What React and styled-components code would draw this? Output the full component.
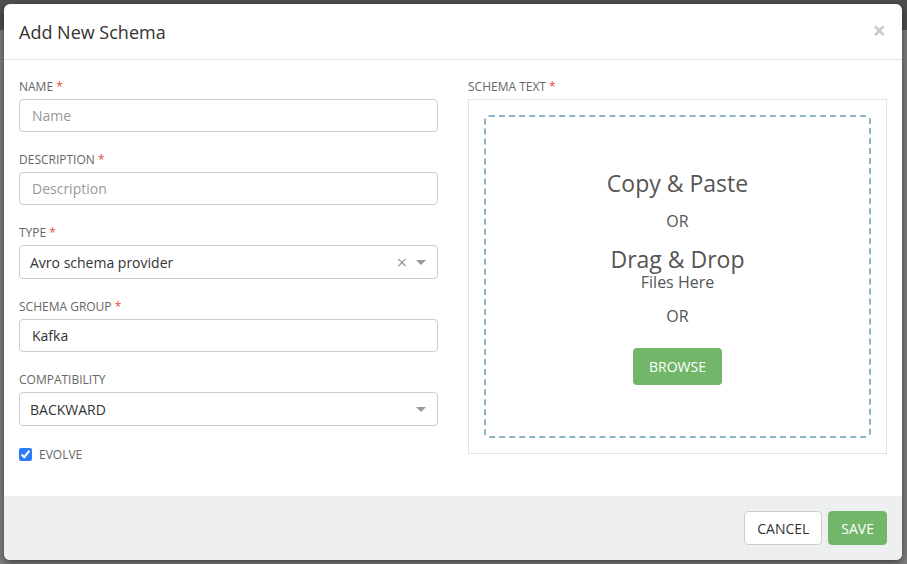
import React from "react"
import styled, { createGlobalStyle } from "styled-components"

const GlobalStyle = createGlobalStyle`
  html, body {
    margin: 0;
    padding: 0;
    font-family: "Open Sans", "Liberation Sans", sans-serif;
  }
  * { box-sizing: border-box; }
`

const COLORS = {
    TEXT: "#333",
    LABEL: "#666",
    MUTED: "#999",
    BORDER: "#ccc",
    GREEN: "#72b669",
    REQUIRED: "#e74c3c",
}

export default function App() {
    return (
        <>
            <GlobalStyle />
            <Backdrop>
                <Modal>
                    <Header>
                        <Title>Add New Schema</Title>
                        <Close>×</Close>
                    </Header>

                    <Body>
                        <Column>
                            <Field label="NAME" required>
                                <Input placeholder="Name" />
                            </Field>
                            <Field label="DESCRIPTION" required>
                                <Input placeholder="Description" />
                            </Field>
                            <Field label="TYPE" required>
                                <Select value="Avro schema provider" clearable />
                            </Field>
                            <Field label="SCHEMA GROUP" required>
                                <Input defaultValue="Kafka" />
                            </Field>
                            <Field label="COMPATIBILITY">
                                <Select value="BACKWARD" />
                            </Field>
                            <CheckRow>
                                <Check type="checkbox" defaultChecked />
                                <CheckLabel>EVOLVE</CheckLabel>
                            </CheckRow>
                        </Column>

                        <Column>
                            <Label>SCHEMA TEXT <Star>*</Star></Label>
                            <DropPanel>
                                <DropZone>
                                    <BigText>Copy &amp; Paste</BigText>
                                    <SmallText $top={15}>OR</SmallText>
                                    <BigText $top={15}>Drag &amp; Drop</BigText>
                                    <SmallText>Files Here</SmallText>
                                    <SmallText $top={14}>OR</SmallText>
                                    <BrowseButton>BROWSE</BrowseButton>
                                </DropZone>
                            </DropPanel>
                        </Column>
                    </Body>

                    <Footer>
                        <Button>CANCEL</Button>
                        <Button $primary>SAVE</Button>
                    </Footer>
                </Modal>
            </Backdrop>
        </>
    )
}

const Field = ({ label, required, children }) => (
    <Group>
        <Label>
            {label} {required && <Star>*</Star>}
        </Label>
        {children}
    </Group>
)

const Select = ({ value, clearable }) => (
    <SelectBox>
        <SelectValue>{value}</SelectValue>
        {clearable && <Clear>×</Clear>}
        <Caret />
    </SelectBox>
)

const Backdrop = styled.div({
    width: "100vw",
    height: "100vh",
    padding: "4px 5px 4px 4px",
    background: "linear-gradient(#4f4f4f 0px, #4f4f4f 30px, #7f7f7f 30px, #7f7f7f 100%)",
    display: "flex",
})

const Modal = styled.div({
    flex: 1,
    height: "556px",
    backgroundColor: "white",
    borderRadius: "6px",
    boxShadow: "0 3px 9px rgba(0,0,0,0.5)",
    display: "flex",
    flexDirection: "column",
    overflow: "hidden",
})

const Header = styled.div({
    height: "56px",
    padding: "0 15px",
    borderBottom: "1px solid #e5e5e5",
    display: "flex",
    alignItems: "center",
    justifyContent: "space-between",
})

const Title = styled.h4({
    margin: 0,
    fontSize: "18px",
    fontWeight: 400,
    color: COLORS.TEXT,
})

const Close = styled.span({
    fontSize: "23px",
    fontWeight: 700,
    color: "#c9c9c9",
    lineHeight: 1,
    marginTop: "-2px",
    marginRight: "1px",
})

const Body = styled.div({
    flex: 1,
    padding: "18px 15px 0 15px",
    display: "grid",
    gridTemplateColumns: "1fr 1fr",
    columnGap: "30px",
})

const Column = styled.div({
    display: "flex",
    flexDirection: "column",
})

const Group = styled.div({
    marginBottom: "19px",
})

const Label = styled.div({
    fontSize: "12px",
    lineHeight: "17px",
    color: COLORS.LABEL,
    marginBottom: "4px",
})

const Star = styled.span({
    color: COLORS.REQUIRED,
})

const Input = styled.input({
    display: "block",
    width: "100%",
    height: "33px",
    padding: "0 12px",
    fontFamily: "inherit",
    fontSize: "14px",
    color: COLORS.TEXT,
    border: "1px solid " + COLORS.BORDER,
    borderRadius: "4px",
    outline: "none",
    "&::placeholder": {
        color: COLORS.MUTED,
    },
})

const SelectBox = styled.div({
    height: "34px",
    padding: "0 10px 0 10px",
    border: "1px solid " + COLORS.BORDER,
    borderRadius: "4px",
    display: "flex",
    alignItems: "center",
})

const SelectValue = styled.span({
    flex: 1,
    fontSize: "14px",
    color: COLORS.TEXT,
})

const Clear = styled.span({
    fontSize: "18px",
    color: COLORS.MUTED,
    marginRight: "9px",
    lineHeight: 1,
})

const Caret = styled.span({
    width: 0,
    height: 0,
    borderLeft: "5px solid transparent",
    borderRight: "5px solid transparent",
    borderTop: "5px solid " + COLORS.MUTED,
    marginRight: "1px",
})

const CheckRow = styled.label({
    display: "flex",
    alignItems: "center",
    height: "18px",
})

const Check = styled.input({
    margin: "0 7px 0 0",
    width: "13px",
    height: "13px",
    accentColor: "#2b7cf6",
})

const CheckLabel = styled.span({
    fontSize: "12px",
    color: COLORS.LABEL,
})

const DropPanel = styled.div({
    height: "355px",
    border: "1px solid #e3e3e3",
    padding: "15px",
})

const DropZone = styled.div({
    height: "100%",
    paddingTop: "2px",
    border: "2px dashed #8db4c6",
    borderRadius: "5px",
    display: "flex",
    flexDirection: "column",
    alignItems: "center",
    justifyContent: "center",
    color: "#555",
})

const BigText = styled.div`
    font-size: 23px;
    line-height: 26px;
    margin-top: ${(p) => p.$top || 0}px;
`

const SmallText = styled.div`
    font-size: 16px;
    line-height: 20px;
    margin-top: ${(p) => p.$top || 0}px;
`

const BrowseButton = styled.button({
    marginTop: "22px",
    padding: "9px 16px",
    fontFamily: "inherit",
    fontSize: "14px",
    lineHeight: "19px",
    color: "white",
    backgroundColor: COLORS.GREEN,
    border: "none",
    borderRadius: "4px",
})

const Footer = styled.div({
    height: "64px",
    backgroundColor: "#eef0ef",
    padding: "0 15px",
    display: "flex",
    alignItems: "center",
    justifyContent: "flex-end",
    gap: "6px",
})

const Button = styled.button`
    height: 34px;
    padding: 0 12px;
    font-family: inherit;
    font-size: 14px;
    border-radius: 4px;
    color: ${(p) => (p.$primary ? "white" : COLORS.TEXT)};
    background-color: ${(p) => (p.$primary ? COLORS.GREEN : "white")};
    border: 1px solid ${(p) => (p.$primary ? COLORS.GREEN : COLORS.BORDER)};
`
